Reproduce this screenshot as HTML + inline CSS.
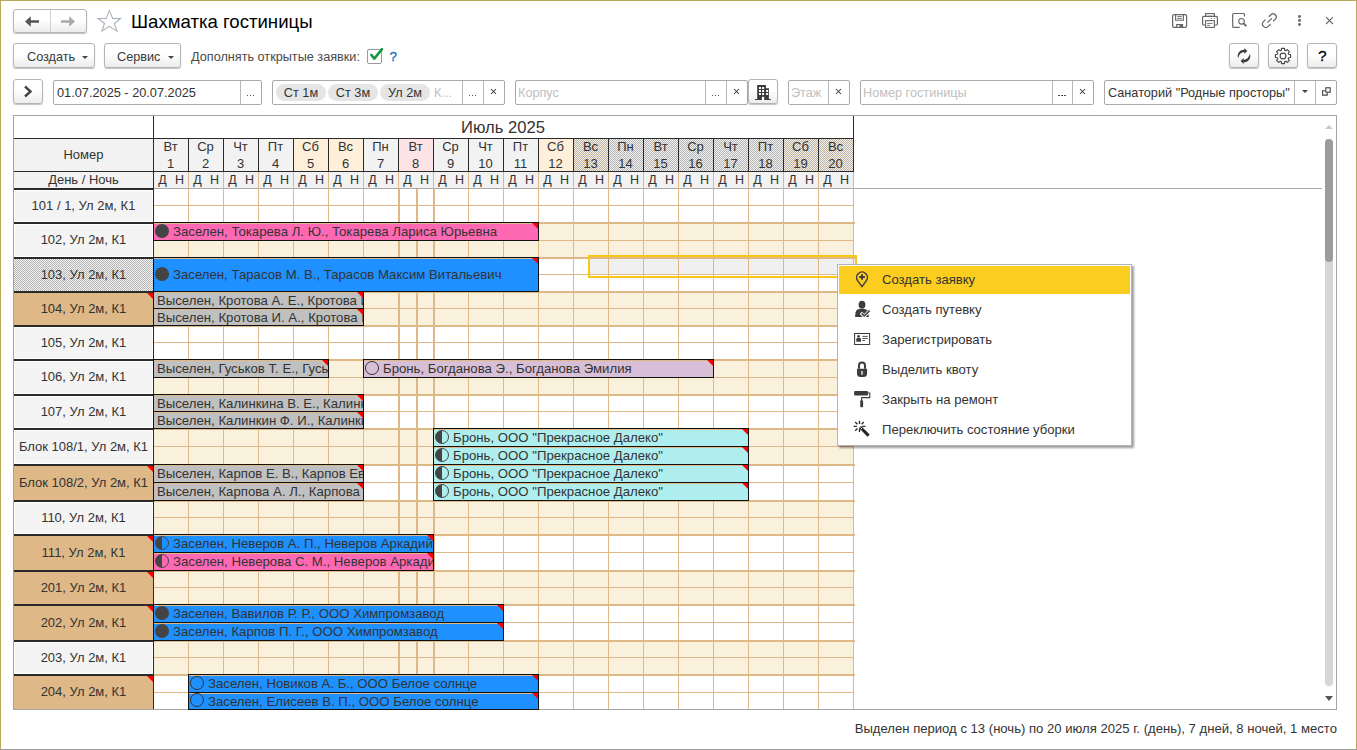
<!DOCTYPE html><html><head><meta charset="utf-8"><style>
html,body{margin:0;padding:0;}
body{width:1357px;height:750px;overflow:hidden;position:relative;background:#fff;font-family:"Liberation Sans", sans-serif;font-size:13px;color:#333;}
div{position:absolute;box-sizing:border-box;}
.t{white-space:nowrap;line-height:16px;}
.btn{border:1px solid #b4b4b4;border-radius:3px;background:linear-gradient(#fff 0%,#fff 45%,#ececec 100%);box-shadow:0 1px 1px rgba(0,0,0,.25);}
.fld{border:1px solid #a9a9a9;border-radius:2px;background:#fff;}
.chk{background:repeating-conic-gradient(#b4b4b4 0 25%, #f3f3f3 0 50%) 0 0/2px 2px;}
.chkw{background:repeating-conic-gradient(#b4b4b4 0 25%, #fdefd9 0 50%) 0 0/2px 2px;}

</style></head><body>
<div style="left:0px;top:0px;width:1357px;height:1px;background:#b9a95a"></div>
<div style="left:0px;top:0px;width:1px;height:750px;background:#b9a95a"></div>
<div style="left:1356px;top:0px;width:1px;height:750px;background:#b9a95a"></div>
<div style="left:0px;top:749px;width:1357px;height:1px;background:#9a9a9a"></div>
<div class="btn" style="left:13px;top:9px;width:74px;height:24px;"></div>
<div style="left:50px;top:10px;width:1px;height:22px;background:#d0d0d0"></div>
<svg style="position:absolute;left:0;top:0" width="90" height="40"><path d="M25 21.5 L30.8 16.2 L30.8 20.2 L39 20.2 L39 22.8 L30.8 22.8 L30.8 26.8 Z" fill="#555"/><path d="M75 21.5 L69.2 16.2 L69.2 20.2 L61 20.2 L61 22.8 L69.2 22.8 L69.2 26.8 Z" fill="#a9a9a9"/></svg>
<svg style="position:absolute;left:90px;top:0" width="40" height="40" viewBox="90 0 40 40"><path d="M109.4 10.6 L112.7 18.5 L120.6 18.5 L114.3 23.5 L116.9 31.1 L109.4 26.3 L101.9 31.1 L104.5 23.5 L98.2 18.5 L106.1 18.5 Z" fill="none" stroke="#a7b0b9" stroke-width="1.05" stroke-linejoin="miter"/></svg>
<div class="t" style="left:131px;top:12px;font-size:18.6px;color:#000;line-height:20px">Шахматка гостиницы</div>
<svg style="position:absolute;left:1150px;top:0" width="200" height="40" viewBox="1150 0 200 40">
<path d="M1174.2 14.6 H1185.2 Q1186.6 14.6 1186.6 16 V26 Q1186.6 27.4 1185.2 27.4 H1174 Q1172.6 27.4 1172.6 26 V16 Q1172.6 14.6 1174.2 14.6 Z" fill="none" stroke="#666" stroke-width="1.2"/>
<path d="M1175.6 14.6 V20.2 H1183.4 V14.6" fill="none" stroke="#666" stroke-width="1.1"/>
<path d="M1177.2 16.6 H1181.8 M1177.2 18.5 H1181.8" stroke="#666" stroke-width="0.9"/>
<path d="M1176.6 27.4 V24.6 H1182.6 V27.4" fill="none" stroke="#666" stroke-width="1.1"/>
<rect x="1179.6" y="24.6" width="3" height="2.8" fill="#666"/>
<rect x="1205.6" y="13.6" width="8.8" height="2.8" fill="none" stroke="#666" stroke-width="1.1"/>
<path d="M1205.4 25 H1203.6 Q1202.6 25 1202.6 24 V17.4 Q1202.6 16.4 1203.6 16.4 H1216.4 Q1217.4 16.4 1217.4 17.4 V24 Q1217.4 25 1216.4 25 H1214.6" fill="none" stroke="#666" stroke-width="1.2"/>
<rect x="1205.6" y="20.6" width="8.8" height="6.8" fill="#fff" stroke="#666" stroke-width="1.1"/>
<path d="M1207.2 23.4 H1212.6 M1207.2 25.4 H1209.8 M1211 18.5 H1212 M1214.2 18.5 H1215.2" stroke="#666" stroke-width="0.9"/>
<path d="M1239.7 27.4 H1233.6 Q1232.7 27.4 1232.7 26.5 V14.4 Q1232.7 13.5 1233.6 13.5 H1243.6 Q1244.5 13.5 1244.5 14.4 V16.6" fill="none" stroke="#666" stroke-width="1.2"/>
<circle cx="1241.5" cy="21.3" r="2.8" fill="none" stroke="#666" stroke-width="1.1"/>
<path d="M1243.6 23.4 L1246.3 26.1" stroke="#666" stroke-width="1.9"/>
<path d="M1268.8 16.8 L1270.9 14.7 A3 3 0 0 1 1275.3 19.1 L1273.2 21.2" fill="none" stroke="#666" stroke-width="1.25"/>
<path d="M1265.5 19.6 L1263.5 21.6 A3.2 3.2 0 0 0 1268.3 26.4 L1270.5 24.2" fill="none" stroke="#666" stroke-width="1.25"/>
<path d="M1267.4 22.7 L1271.8 18.3" stroke="#666" stroke-width="1.2"/>
<circle cx="1299.5" cy="16.45" r="1.45" fill="#666"/><circle cx="1299.5" cy="20.5" r="1.45" fill="#666"/><circle cx="1299.5" cy="24.55" r="1.45" fill="#666"/>
<path d="M1326.1 17.2 L1332.9 24 M1332.9 17.2 L1326.1 24" stroke="#666" stroke-width="1.1"/>
</svg>
<div class="btn" style="left:13px;top:43px;width:82px;height:25px;"></div>
<div class="t" style="left:27px;top:48.5px;font-size:12.7px;color:#3a3a3a">Создать</div>
<div style="left:82px;top:56px;width:0;height:0;border-left:3px solid transparent;border-right:3px solid transparent;border-top:3.2px solid #444"></div>
<div class="btn" style="left:104px;top:43px;width:77px;height:25px;"></div>
<div class="t" style="left:117px;top:48.5px;font-size:12.7px;color:#3a3a3a">Сервис</div>
<div style="left:168px;top:56px;width:0;height:0;border-left:3px solid transparent;border-right:3px solid transparent;border-top:3.2px solid #444"></div>
<div class="t" style="left:191px;top:48.5px;font-size:12.68px;color:#4a4a4a">Дополнять открытые заявки:</div>
<div style="left:367px;top:49px;width:15px;height:15px;border:1px solid #9a9a9a;border-radius:2px;background:#fff"></div>
<svg style="position:absolute;left:368px;top:47px" width="16" height="16" viewBox="0 0 16 16"><path d="M3.3 7.9 L6.3 11.6 L14 2.1" fill="none" stroke="#12993d" stroke-width="2.5" stroke-linecap="round" stroke-linejoin="round"/></svg>
<div class="t" style="left:389.5px;top:48.5px;font-size:13.4px;color:#1a72c4;-webkit-text-stroke:0.35px #1a72c4">?</div>
<div class="btn" style="left:1229px;top:43px;width:30px;height:25px;"></div>
<div class="btn" style="left:1268px;top:43px;width:30px;height:25px;"></div>
<div class="btn" style="left:1307px;top:43px;width:30px;height:25px;"></div>
<svg style="position:absolute;left:1220px;top:40px" width="80" height="30" viewBox="1220 40 80 30">
<path d="M1238.08 58.15 A6.3 6.3 0 0 1 1244.4 49.7 L1244.4 48 L1247.3 50.9 L1244.4 53.9 L1244.4 52.1 Q1239.6 52.3 1238.08 58.15 Z" fill="#3c3c3c"/><path d="M1249.92 53.85 A6.3 6.3 0 0 1 1243.6 62.3 L1243.6 64 L1240.7 61.1 L1243.6 58.1 L1243.6 59.9 Q1248.4 59.7 1249.92 53.85 Z" fill="#3c3c3c"/>
</svg>
<svg style="position:absolute;left:1260px;top:40px" width="40" height="30" viewBox="1260 40 40 30"><path d="M1280.74 50.55 L1281.28 50.36 L1281.53 48.44 L1284.47 48.44 L1284.72 50.36 L1285.26 50.55 L1285.77 50.79 L1287.31 49.62 L1289.38 51.69 L1288.21 53.23 L1288.45 53.74 L1288.64 54.28 L1290.56 54.53 L1290.56 57.47 L1288.64 57.72 L1288.45 58.26 L1288.21 58.77 L1289.38 60.31 L1287.31 62.38 L1285.77 61.21 L1285.26 61.45 L1284.72 61.64 L1284.47 63.56 L1281.53 63.56 L1281.28 61.64 L1280.74 61.45 L1280.23 61.21 L1278.69 62.38 L1276.62 60.31 L1277.79 58.77 L1277.55 58.26 L1277.36 57.72 L1275.44 57.47 L1275.44 54.53 L1277.36 54.28 L1277.55 53.74 L1277.79 53.23 L1276.62 51.69 L1278.69 49.62 L1280.23 50.79 Z" fill="none" stroke="#474747" stroke-width="1.15" stroke-linejoin="round"/><circle cx="1283" cy="56" r="2.9" fill="none" stroke="#474747" stroke-width="1.1"/></svg>
<div class="t" style="left:1318px;top:47px;font-size:15.5px;color:#000;font-weight:normal;line-height:18px;-webkit-text-stroke:0.3px #000">?</div>
<div class="btn" style="left:13px;top:79px;width:30px;height:25px;"></div>
<svg style="position:absolute;left:23px;top:85px" width="10" height="13" viewBox="0 0 10 13"><path d="M2 1.5 L7.5 6.5 L2 11.5" fill="none" stroke="#444" stroke-width="2.4"/></svg>
<div class="fld" style="left:53px;top:80px;width:209px;height:25px;"></div>
<div style="left:240px;top:81px;width:1px;height:23px;background:#b8b8b8"></div>
<div class="t" style="left:57px;top:85px;font-size:12.75px;color:#333">01.07.2025 - 20.07.2025</div>
<div style="left:246.85px;top:94.8px;width:1.4px;height:1.4px;background:#444;border-radius:0.3px"></div><div style="left:249.85px;top:94.8px;width:1.4px;height:1.4px;background:#444;border-radius:0.3px"></div><div style="left:252.85px;top:94.8px;width:1.4px;height:1.4px;background:#444;border-radius:0.3px"></div>
<div class="fld" style="left:272px;top:80px;width:233px;height:25px;"></div>
<div style="left:462px;top:81px;width:1px;height:23px;background:#b8b8b8"></div>
<div style="left:483px;top:81px;width:1px;height:23px;background:#b8b8b8"></div>
<div style="left:276px;top:84px;width:50px;height:17px;border-radius:9px;background:#e5e5e5"></div>
<div class="t" style="left:276px;top:84.5px;width:50px;text-align:center;font-size:12.7px;line-height:17px;color:#333">Ст 1м</div>
<div style="left:328px;top:84px;width:50px;height:17px;border-radius:9px;background:#e5e5e5"></div>
<div class="t" style="left:328px;top:84.5px;width:50px;text-align:center;font-size:12.7px;line-height:17px;color:#333">Ст 3м</div>
<div style="left:380px;top:84px;width:50px;height:17px;border-radius:9px;background:#e5e5e5"></div>
<div class="t" style="left:380px;top:84.5px;width:50px;text-align:center;font-size:12.7px;line-height:17px;color:#333">Ул 2м</div>
<div class="t" style="left:434px;top:85px;font-size:12.7px;color:#c0c0c0">К...</div>
<div style="left:468.85px;top:94.8px;width:1.4px;height:1.4px;background:#444;border-radius:0.3px"></div><div style="left:471.85px;top:94.8px;width:1.4px;height:1.4px;background:#444;border-radius:0.3px"></div><div style="left:474.85px;top:94.8px;width:1.4px;height:1.4px;background:#444;border-radius:0.3px"></div>
<svg style="position:absolute;left:489px;top:87px" width="9" height="9" viewBox="0 0 9 9"><path d="M2 2 L7 7 M7 2 L2 7" stroke="#3a3a3a" stroke-width="1.05"/></svg>
<div class="fld" style="left:515px;top:80px;width:233px;height:25px;"></div>
<div style="left:705px;top:81px;width:1px;height:23px;background:#b8b8b8"></div>
<div style="left:726px;top:81px;width:1px;height:23px;background:#b8b8b8"></div>
<div class="t" style="left:518px;top:85px;font-size:12.7px;color:#c0c0c0">Корпус</div>
<div style="left:711.85px;top:94.8px;width:1.4px;height:1.4px;background:#444;border-radius:0.3px"></div><div style="left:714.85px;top:94.8px;width:1.4px;height:1.4px;background:#444;border-radius:0.3px"></div><div style="left:717.85px;top:94.8px;width:1.4px;height:1.4px;background:#444;border-radius:0.3px"></div>
<svg style="position:absolute;left:732px;top:87px" width="9" height="9" viewBox="0 0 9 9"><path d="M2 2 L7 7 M7 2 L2 7" stroke="#3a3a3a" stroke-width="1.05"/></svg>
<div class="btn" style="left:748px;top:79px;width:30px;height:25px;"></div>
<svg style="position:absolute;left:740px;top:76px" width="40" height="30" viewBox="740 76 40 30"><path d="M757.2 85 H765.9 V88.2 H768.9 V99 H770.8 V100 H755 V99 H757.2 Z" fill="#3a3a3a"/><g fill="#fff"><rect x="759" y="87" width="2" height="2"/><rect x="762.1" y="87" width="2" height="2"/><rect x="759" y="90" width="2" height="2"/><rect x="762.1" y="90" width="2" height="2"/><rect x="759" y="93" width="2" height="2"/><rect x="762.1" y="93" width="2" height="2"/><rect x="766.1" y="90" width="2" height="2"/><rect x="766.1" y="93" width="2" height="2"/><rect x="761.9" y="96.8" width="2.3" height="3.4"/></g></svg>
<div class="fld" style="left:788px;top:80px;width:62px;height:25px;"></div>
<div style="left:828px;top:81px;width:1px;height:23px;background:#b8b8b8"></div>
<div class="t" style="left:791px;top:85px;font-size:12.7px;color:#c0c0c0">Этаж</div>
<svg style="position:absolute;left:834px;top:87px" width="9" height="9" viewBox="0 0 9 9"><path d="M2 2 L7 7 M7 2 L2 7" stroke="#3a3a3a" stroke-width="1.05"/></svg>
<div class="fld" style="left:860px;top:80px;width:234px;height:25px;"></div>
<div style="left:1052px;top:81px;width:1px;height:23px;background:#b8b8b8"></div>
<div style="left:1072px;top:81px;width:1px;height:23px;background:#b8b8b8"></div>
<div class="t" style="left:863px;top:85px;font-size:12.7px;color:#c0c0c0">Номер гостиницы</div>
<div style="left:1058.35px;top:94.8px;width:1.4px;height:1.4px;background:#444;border-radius:0.3px"></div><div style="left:1061.35px;top:94.8px;width:1.4px;height:1.4px;background:#444;border-radius:0.3px"></div><div style="left:1064.35px;top:94.8px;width:1.4px;height:1.4px;background:#444;border-radius:0.3px"></div>
<svg style="position:absolute;left:1078px;top:87px" width="9" height="9" viewBox="0 0 9 9"><path d="M2 2 L7 7 M7 2 L2 7" stroke="#3a3a3a" stroke-width="1.05"/></svg>
<div class="fld" style="left:1104px;top:80px;width:233px;height:25px;"></div>
<div style="left:1294px;top:81px;width:1px;height:23px;background:#b8b8b8"></div>
<div style="left:1315px;top:81px;width:1px;height:23px;background:#b8b8b8"></div>
<div class="t" style="left:1108px;top:85px;font-size:12.7px;color:#333">Санаторий "Родные просторы"</div>
<div style="left:1302px;top:90px;width:0;height:0;border-left:3px solid transparent;border-right:3px solid transparent;border-top:3.2px solid #444"></div>
<svg style="position:absolute;left:1320px;top:86px" width="12" height="12" viewBox="0 0 12 12"><rect x="5.8" y="1.8" width="4.4" height="4.4" fill="none" stroke="#444" stroke-width="1.1"/><path d="M5 4.8 H2.6 V9.1 H7.2 V6.8" fill="none" stroke="#444" stroke-width="1.1"/></svg>
<div style="left:13px;top:115px;width:1324px;height:595px;border:1px solid #a4a4a4"></div>
<div style="left:14px;top:139px;width:139px;height:49px;background:#f2f2f2"></div>
<div style="left:153px;top:139px;width:35px;height:32px;background:#f2f2f2"></div>
<div style="left:153px;top:172px;width:35px;height:16px;background:#f2f2f2"></div>
<div class="t" style="left:153px;top:139px;width:35px;text-align:center;font-size:13px;line-height:16.6px">Вт<br>1</div>
<div class="t" style="left:154px;top:172px;width:17px;text-align:center;font-size:12.5px;line-height:16px">Д</div>
<div class="t" style="left:171px;top:172px;width:17px;text-align:center;font-size:12.5px;line-height:16px">Н</div>
<div style="left:188px;top:139px;width:35px;height:32px;background:#f2f2f2"></div>
<div style="left:188px;top:172px;width:35px;height:16px;background:#f2f2f2"></div>
<div class="t" style="left:188px;top:139px;width:35px;text-align:center;font-size:13px;line-height:16.6px">Ср<br>2</div>
<div class="t" style="left:189px;top:172px;width:17px;text-align:center;font-size:12.5px;line-height:16px">Д</div>
<div class="t" style="left:206px;top:172px;width:17px;text-align:center;font-size:12.5px;line-height:16px">Н</div>
<div style="left:223px;top:139px;width:35px;height:32px;background:#f2f2f2"></div>
<div style="left:223px;top:172px;width:35px;height:16px;background:#f2f2f2"></div>
<div class="t" style="left:223px;top:139px;width:35px;text-align:center;font-size:13px;line-height:16.6px">Чт<br>3</div>
<div class="t" style="left:224px;top:172px;width:17px;text-align:center;font-size:12.5px;line-height:16px">Д</div>
<div class="t" style="left:241px;top:172px;width:17px;text-align:center;font-size:12.5px;line-height:16px">Н</div>
<div style="left:258px;top:139px;width:35px;height:32px;background:#f2f2f2"></div>
<div style="left:258px;top:172px;width:35px;height:16px;background:#f2f2f2"></div>
<div class="t" style="left:258px;top:139px;width:35px;text-align:center;font-size:13px;line-height:16.6px">Пт<br>4</div>
<div class="t" style="left:259px;top:172px;width:17px;text-align:center;font-size:12.5px;line-height:16px">Д</div>
<div class="t" style="left:276px;top:172px;width:17px;text-align:center;font-size:12.5px;line-height:16px">Н</div>
<div style="left:293px;top:139px;width:35px;height:32px;background:#fdefd9"></div>
<div style="left:293px;top:172px;width:35px;height:16px;background:#f2f2f2"></div>
<div class="t" style="left:293px;top:139px;width:35px;text-align:center;font-size:13px;line-height:16.6px">Сб<br>5</div>
<div class="t" style="left:294px;top:172px;width:17px;text-align:center;font-size:12.5px;line-height:16px">Д</div>
<div class="t" style="left:311px;top:172px;width:17px;text-align:center;font-size:12.5px;line-height:16px">Н</div>
<div style="left:328px;top:139px;width:35px;height:32px;background:#fdefd9"></div>
<div style="left:328px;top:172px;width:35px;height:16px;background:#f2f2f2"></div>
<div class="t" style="left:328px;top:139px;width:35px;text-align:center;font-size:13px;line-height:16.6px">Вс<br>6</div>
<div class="t" style="left:329px;top:172px;width:17px;text-align:center;font-size:12.5px;line-height:16px">Д</div>
<div class="t" style="left:346px;top:172px;width:17px;text-align:center;font-size:12.5px;line-height:16px">Н</div>
<div style="left:363px;top:139px;width:35px;height:32px;background:#f2f2f2"></div>
<div style="left:363px;top:172px;width:35px;height:16px;background:#f2f2f2"></div>
<div class="t" style="left:363px;top:139px;width:35px;text-align:center;font-size:13px;line-height:16.6px">Пн<br>7</div>
<div class="t" style="left:364px;top:172px;width:17px;text-align:center;font-size:12.5px;line-height:16px">Д</div>
<div class="t" style="left:381px;top:172px;width:17px;text-align:center;font-size:12.5px;line-height:16px">Н</div>
<div style="left:398px;top:139px;width:35px;height:32px;background:#fde3e3"></div>
<div style="left:398px;top:172px;width:35px;height:16px;background:#f2f2f2"></div>
<div class="t" style="left:398px;top:139px;width:35px;text-align:center;font-size:13px;line-height:16.6px">Вт<br>8</div>
<div class="t" style="left:399px;top:172px;width:17px;text-align:center;font-size:12.5px;line-height:16px">Д</div>
<div class="t" style="left:416px;top:172px;width:17px;text-align:center;font-size:12.5px;line-height:16px">Н</div>
<div style="left:433px;top:139px;width:35px;height:32px;background:#f2f2f2"></div>
<div style="left:433px;top:172px;width:35px;height:16px;background:#f2f2f2"></div>
<div class="t" style="left:433px;top:139px;width:35px;text-align:center;font-size:13px;line-height:16.6px">Ср<br>9</div>
<div class="t" style="left:434px;top:172px;width:17px;text-align:center;font-size:12.5px;line-height:16px">Д</div>
<div class="t" style="left:451px;top:172px;width:17px;text-align:center;font-size:12.5px;line-height:16px">Н</div>
<div style="left:468px;top:139px;width:35px;height:32px;background:#f2f2f2"></div>
<div style="left:468px;top:172px;width:35px;height:16px;background:#f2f2f2"></div>
<div class="t" style="left:468px;top:139px;width:35px;text-align:center;font-size:13px;line-height:16.6px">Чт<br>10</div>
<div class="t" style="left:469px;top:172px;width:17px;text-align:center;font-size:12.5px;line-height:16px">Д</div>
<div class="t" style="left:486px;top:172px;width:17px;text-align:center;font-size:12.5px;line-height:16px">Н</div>
<div style="left:503px;top:139px;width:35px;height:32px;background:#f2f2f2"></div>
<div style="left:503px;top:172px;width:35px;height:16px;background:#f2f2f2"></div>
<div class="t" style="left:503px;top:139px;width:35px;text-align:center;font-size:13px;line-height:16.6px">Пт<br>11</div>
<div class="t" style="left:504px;top:172px;width:17px;text-align:center;font-size:12.5px;line-height:16px">Д</div>
<div class="t" style="left:521px;top:172px;width:17px;text-align:center;font-size:12.5px;line-height:16px">Н</div>
<div style="left:538px;top:139px;width:35px;height:32px;background:#fdefd9"></div>
<div style="left:538px;top:172px;width:35px;height:16px;background:#f2f2f2"></div>
<div class="t" style="left:538px;top:139px;width:35px;text-align:center;font-size:13px;line-height:16.6px">Сб<br>12</div>
<div class="t" style="left:539px;top:172px;width:17px;text-align:center;font-size:12.5px;line-height:16px">Д</div>
<div class="t" style="left:556px;top:172px;width:17px;text-align:center;font-size:12.5px;line-height:16px">Н</div>
<div class="chkw" style="left:573px;top:139px;width:35px;height:32px"></div>
<div style="left:573px;top:172px;width:35px;height:16px;background:#f2f2f2"></div>
<div class="t" style="left:573px;top:139px;width:35px;text-align:center;font-size:13px;line-height:16.6px">Вс<br>13</div>
<div class="t" style="left:574px;top:172px;width:17px;text-align:center;font-size:12.5px;line-height:16px">Д</div>
<div class="t" style="left:591px;top:172px;width:17px;text-align:center;font-size:12.5px;line-height:16px">Н</div>
<div class="chk" style="left:608px;top:139px;width:35px;height:32px"></div>
<div style="left:608px;top:172px;width:35px;height:16px;background:#f2f2f2"></div>
<div class="t" style="left:608px;top:139px;width:35px;text-align:center;font-size:13px;line-height:16.6px">Пн<br>14</div>
<div class="t" style="left:609px;top:172px;width:17px;text-align:center;font-size:12.5px;line-height:16px">Д</div>
<div class="t" style="left:626px;top:172px;width:17px;text-align:center;font-size:12.5px;line-height:16px">Н</div>
<div class="chk" style="left:643px;top:139px;width:35px;height:32px"></div>
<div style="left:643px;top:172px;width:35px;height:16px;background:#f2f2f2"></div>
<div class="t" style="left:643px;top:139px;width:35px;text-align:center;font-size:13px;line-height:16.6px">Вт<br>15</div>
<div class="t" style="left:644px;top:172px;width:17px;text-align:center;font-size:12.5px;line-height:16px">Д</div>
<div class="t" style="left:661px;top:172px;width:17px;text-align:center;font-size:12.5px;line-height:16px">Н</div>
<div class="chk" style="left:678px;top:139px;width:35px;height:32px"></div>
<div style="left:678px;top:172px;width:35px;height:16px;background:#f2f2f2"></div>
<div class="t" style="left:678px;top:139px;width:35px;text-align:center;font-size:13px;line-height:16.6px">Ср<br>16</div>
<div class="t" style="left:679px;top:172px;width:17px;text-align:center;font-size:12.5px;line-height:16px">Д</div>
<div class="t" style="left:696px;top:172px;width:17px;text-align:center;font-size:12.5px;line-height:16px">Н</div>
<div class="chk" style="left:713px;top:139px;width:35px;height:32px"></div>
<div style="left:713px;top:172px;width:35px;height:16px;background:#f2f2f2"></div>
<div class="t" style="left:713px;top:139px;width:35px;text-align:center;font-size:13px;line-height:16.6px">Чт<br>17</div>
<div class="t" style="left:714px;top:172px;width:17px;text-align:center;font-size:12.5px;line-height:16px">Д</div>
<div class="t" style="left:731px;top:172px;width:17px;text-align:center;font-size:12.5px;line-height:16px">Н</div>
<div class="chk" style="left:748px;top:139px;width:35px;height:32px"></div>
<div style="left:748px;top:172px;width:35px;height:16px;background:#f2f2f2"></div>
<div class="t" style="left:748px;top:139px;width:35px;text-align:center;font-size:13px;line-height:16.6px">Пт<br>18</div>
<div class="t" style="left:749px;top:172px;width:17px;text-align:center;font-size:12.5px;line-height:16px">Д</div>
<div class="t" style="left:766px;top:172px;width:17px;text-align:center;font-size:12.5px;line-height:16px">Н</div>
<div class="chkw" style="left:783px;top:139px;width:35px;height:32px"></div>
<div style="left:783px;top:172px;width:35px;height:16px;background:#f2f2f2"></div>
<div class="t" style="left:783px;top:139px;width:35px;text-align:center;font-size:13px;line-height:16.6px">Сб<br>19</div>
<div class="t" style="left:784px;top:172px;width:17px;text-align:center;font-size:12.5px;line-height:16px">Д</div>
<div class="t" style="left:801px;top:172px;width:17px;text-align:center;font-size:12.5px;line-height:16px">Н</div>
<div class="chkw" style="left:818px;top:139px;width:35px;height:32px"></div>
<div style="left:818px;top:172px;width:35px;height:16px;background:#f2f2f2"></div>
<div class="t" style="left:818px;top:139px;width:35px;text-align:center;font-size:13px;line-height:16.6px">Вс<br>20</div>
<div class="t" style="left:819px;top:172px;width:17px;text-align:center;font-size:12.5px;line-height:16px">Д</div>
<div class="t" style="left:836px;top:172px;width:17px;text-align:center;font-size:12.5px;line-height:16px">Н</div>
<div class="t" style="left:153px;top:119px;width:700px;text-align:center;font-size:16.6px;line-height:18px">Июль 2025</div>
<div class="t" style="left:14px;top:147px;width:139px;text-align:center;font-size:13px">Номер</div>
<div class="t" style="left:14px;top:172px;width:139px;text-align:center;font-size:13px">День / Ночь</div>
<div style="left:14px;top:190px;width:139px;height:32px;background:#f4f4f4;border:1px solid #fff"></div>
<div class="t" style="left:14px;top:198px;width:139px;text-align:center;font-size:13px;color:#333">101 / 1, Ул 2м, К1</div>
<div style="left:14px;top:224px;width:139px;height:33px;background:#f4f4f4;border:1px solid #fff"></div>
<div class="t" style="left:14px;top:232px;width:139px;text-align:center;font-size:13px;color:#333">102, Ул 2м, К1</div>
<div style="left:154px;top:224px;width:699px;height:33px;background:#f9f1dc"></div>
<div class="chk" style="left:14px;top:259px;width:139px;height:32px"></div>
<div class="t" style="left:14px;top:267px;width:139px;text-align:center;font-size:13px;color:#333">103, Ул 2м, К1</div>
<div style="left:14px;top:293px;width:139px;height:32px;background:#deb887;border:1px solid #deb887"></div>
<div style="left:147px;top:293px;width:0;height:0;border-top:6px solid #f00;border-left:6px solid transparent"></div>
<div class="t" style="left:14px;top:301px;width:139px;text-align:center;font-size:13px;color:#333">104, Ул 2м, К1</div>
<div style="left:154px;top:293px;width:699px;height:32px;background:#f9f1dc"></div>
<div style="left:14px;top:327px;width:139px;height:32px;background:#f4f4f4;border:1px solid #fff"></div>
<div class="t" style="left:14px;top:335px;width:139px;text-align:center;font-size:13px;color:#333">105, Ул 2м, К1</div>
<div style="left:14px;top:361px;width:139px;height:33px;background:#f4f4f4;border:1px solid #fff"></div>
<div class="t" style="left:14px;top:369px;width:139px;text-align:center;font-size:13px;color:#333">106, Ул 2м, К1</div>
<div style="left:154px;top:361px;width:699px;height:33px;background:#f9f1dc"></div>
<div style="left:14px;top:396px;width:139px;height:32px;background:#f4f4f4;border:1px solid #fff"></div>
<div class="t" style="left:14px;top:404px;width:139px;text-align:center;font-size:13px;color:#333">107, Ул 2м, К1</div>
<div style="left:14px;top:430px;width:139px;height:34px;background:#f4f4f4;border:1px solid #fff"></div>
<div class="t" style="left:14px;top:439px;width:139px;text-align:center;font-size:13px;color:#333">Блок 108/1, Ул 2м, К1</div>
<div style="left:154px;top:430px;width:699px;height:34px;background:#f9f1dc"></div>
<div style="left:14px;top:466px;width:139px;height:34px;background:#deb887;border:1px solid #deb887"></div>
<div style="left:147px;top:466px;width:0;height:0;border-top:6px solid #f00;border-left:6px solid transparent"></div>
<div class="t" style="left:14px;top:475px;width:139px;text-align:center;font-size:13px;color:#333">Блок 108/2, Ул 2м, К1</div>
<div style="left:14px;top:502px;width:139px;height:32px;background:#f4f4f4;border:1px solid #fff"></div>
<div class="t" style="left:14px;top:510px;width:139px;text-align:center;font-size:13px;color:#333">110, Ул 2м, К1</div>
<div style="left:154px;top:502px;width:699px;height:32px;background:#f9f1dc"></div>
<div style="left:14px;top:536px;width:139px;height:34px;background:#deb887;border:1px solid #deb887"></div>
<div style="left:147px;top:536px;width:0;height:0;border-top:6px solid #f00;border-left:6px solid transparent"></div>
<div class="t" style="left:14px;top:545px;width:139px;text-align:center;font-size:13px;color:#333">111, Ул 2м, К1</div>
<div style="left:14px;top:572px;width:139px;height:32px;background:#deb887;border:1px solid #deb887"></div>
<div style="left:147px;top:572px;width:0;height:0;border-top:6px solid #f00;border-left:6px solid transparent"></div>
<div class="t" style="left:14px;top:580px;width:139px;text-align:center;font-size:13px;color:#333">201, Ул 2м, К1</div>
<div style="left:154px;top:572px;width:699px;height:32px;background:#f9f1dc"></div>
<div style="left:14px;top:606px;width:139px;height:34px;background:#deb887;border:1px solid #deb887"></div>
<div style="left:147px;top:606px;width:0;height:0;border-top:6px solid #f00;border-left:6px solid transparent"></div>
<div class="t" style="left:14px;top:615px;width:139px;text-align:center;font-size:13px;color:#333">202, Ул 2м, К1</div>
<div style="left:14px;top:642px;width:139px;height:32px;background:#f4f4f4;border:1px solid #fff"></div>
<div class="t" style="left:14px;top:650px;width:139px;text-align:center;font-size:13px;color:#333">203, Ул 2м, К1</div>
<div style="left:154px;top:642px;width:699px;height:32px;background:#f9f1dc"></div>
<div style="left:14px;top:676px;width:139px;height:33px;background:#deb887;border:1px solid #deb887"></div>
<div style="left:147px;top:676px;width:0;height:0;border-top:6px solid #f00;border-left:6px solid transparent"></div>
<div class="t" style="left:14px;top:684px;width:139px;text-align:center;font-size:13px;color:#333">204, Ул 2м, К1</div>
<div style="left:590px;top:259px;width:265px;height:16px;background:#f0f0f0"></div>
<div style="left:14px;top:222px;width:139px;height:2px;background:#2a2a2a"></div>
<div style="left:154px;top:222px;width:701px;height:2px;background:#deb887"></div>
<div style="left:14px;top:257px;width:139px;height:2px;background:#2a2a2a"></div>
<div style="left:154px;top:257px;width:701px;height:2px;background:#deb887"></div>
<div style="left:14px;top:291px;width:139px;height:2px;background:#2a2a2a"></div>
<div style="left:154px;top:291px;width:701px;height:2px;background:#deb887"></div>
<div style="left:14px;top:325px;width:139px;height:2px;background:#2a2a2a"></div>
<div style="left:154px;top:325px;width:701px;height:2px;background:#deb887"></div>
<div style="left:14px;top:359px;width:139px;height:2px;background:#2a2a2a"></div>
<div style="left:154px;top:359px;width:701px;height:2px;background:#deb887"></div>
<div style="left:14px;top:394px;width:139px;height:2px;background:#2a2a2a"></div>
<div style="left:154px;top:394px;width:701px;height:2px;background:#deb887"></div>
<div style="left:14px;top:428px;width:139px;height:2px;background:#2a2a2a"></div>
<div style="left:154px;top:428px;width:701px;height:2px;background:#deb887"></div>
<div style="left:14px;top:464px;width:139px;height:2px;background:#2a2a2a"></div>
<div style="left:154px;top:464px;width:701px;height:2px;background:#deb887"></div>
<div style="left:14px;top:500px;width:139px;height:2px;background:#2a2a2a"></div>
<div style="left:154px;top:500px;width:701px;height:2px;background:#deb887"></div>
<div style="left:14px;top:534px;width:139px;height:2px;background:#2a2a2a"></div>
<div style="left:154px;top:534px;width:701px;height:2px;background:#deb887"></div>
<div style="left:14px;top:570px;width:139px;height:2px;background:#2a2a2a"></div>
<div style="left:154px;top:570px;width:701px;height:2px;background:#deb887"></div>
<div style="left:14px;top:604px;width:139px;height:2px;background:#2a2a2a"></div>
<div style="left:154px;top:604px;width:701px;height:2px;background:#deb887"></div>
<div style="left:14px;top:640px;width:139px;height:2px;background:#2a2a2a"></div>
<div style="left:154px;top:640px;width:701px;height:2px;background:#deb887"></div>
<div style="left:14px;top:674px;width:139px;height:2px;background:#2a2a2a"></div>
<div style="left:154px;top:674px;width:701px;height:2px;background:#deb887"></div>
<div style="left:14px;top:188px;width:139px;height:2px;background:#2a2a2a"></div>
<div style="left:154px;top:188px;width:1168px;height:1px;background:#a8a8a8"></div>
<div style="left:154px;top:205px;width:699px;height:1px;background:#deb887"></div>
<div style="left:154px;top:240px;width:699px;height:1px;background:#deb887"></div>
<div style="left:154px;top:274px;width:699px;height:1px;background:#deb887"></div>
<div style="left:154px;top:308px;width:699px;height:1px;background:#deb887"></div>
<div style="left:154px;top:342px;width:699px;height:1px;background:#deb887"></div>
<div style="left:154px;top:377px;width:699px;height:1px;background:#deb887"></div>
<div style="left:154px;top:411px;width:699px;height:1px;background:#deb887"></div>
<div style="left:154px;top:446px;width:699px;height:1px;background:#deb887"></div>
<div style="left:154px;top:482px;width:699px;height:1px;background:#deb887"></div>
<div style="left:154px;top:517px;width:699px;height:1px;background:#deb887"></div>
<div style="left:154px;top:552px;width:699px;height:1px;background:#deb887"></div>
<div style="left:154px;top:587px;width:699px;height:1px;background:#deb887"></div>
<div style="left:154px;top:622px;width:699px;height:1px;background:#deb887"></div>
<div style="left:154px;top:657px;width:699px;height:1px;background:#deb887"></div>
<div style="left:154px;top:692px;width:699px;height:1px;background:#deb887"></div>
<div style="left:153px;top:116px;width:1px;height:593px;background:#2a2a2a"></div>
<div style="left:14px;top:138px;width:839px;height:1px;background:#2a2a2a"></div>
<div style="left:14px;top:171px;width:839px;height:1px;background:#2a2a2a"></div>
<div style="left:853px;top:116px;width:1px;height:56px;background:#2a2a2a"></div>
<div style="left:853px;top:172px;width:1px;height:537px;background:#deb887"></div>
<div style="left:188px;top:139px;width:1px;height:33px;background:#2a2a2a"></div>
<div style="left:188px;top:172px;width:1px;height:537px;background:#deb887"></div>
<div style="left:223px;top:139px;width:1px;height:33px;background:#2a2a2a"></div>
<div style="left:223px;top:172px;width:1px;height:537px;background:#deb887"></div>
<div style="left:258px;top:139px;width:1px;height:33px;background:#2a2a2a"></div>
<div style="left:258px;top:172px;width:1px;height:537px;background:#deb887"></div>
<div style="left:293px;top:139px;width:1px;height:33px;background:#2a2a2a"></div>
<div style="left:293px;top:172px;width:1px;height:537px;background:#deb887"></div>
<div style="left:328px;top:139px;width:1px;height:33px;background:#2a2a2a"></div>
<div style="left:328px;top:172px;width:1px;height:537px;background:#deb887"></div>
<div style="left:363px;top:139px;width:1px;height:33px;background:#2a2a2a"></div>
<div style="left:363px;top:172px;width:1px;height:537px;background:#deb887"></div>
<div style="left:398px;top:139px;width:1px;height:33px;background:#2a2a2a"></div>
<div style="left:398px;top:172px;width:1px;height:537px;background:#deb887"></div>
<div style="left:433px;top:139px;width:1px;height:33px;background:#2a2a2a"></div>
<div style="left:433px;top:172px;width:1px;height:537px;background:#deb887"></div>
<div style="left:468px;top:139px;width:1px;height:33px;background:#2a2a2a"></div>
<div style="left:468px;top:172px;width:1px;height:537px;background:#deb887"></div>
<div style="left:503px;top:139px;width:1px;height:33px;background:#2a2a2a"></div>
<div style="left:503px;top:172px;width:1px;height:537px;background:#deb887"></div>
<div style="left:538px;top:139px;width:1px;height:33px;background:#2a2a2a"></div>
<div style="left:538px;top:172px;width:1px;height:537px;background:#deb887"></div>
<div style="left:573px;top:139px;width:1px;height:33px;background:#2a2a2a"></div>
<div style="left:573px;top:172px;width:1px;height:537px;background:#deb887"></div>
<div style="left:608px;top:139px;width:1px;height:33px;background:#2a2a2a"></div>
<div style="left:608px;top:172px;width:1px;height:537px;background:#deb887"></div>
<div style="left:643px;top:139px;width:1px;height:33px;background:#2a2a2a"></div>
<div style="left:643px;top:172px;width:1px;height:537px;background:#deb887"></div>
<div style="left:678px;top:139px;width:1px;height:33px;background:#2a2a2a"></div>
<div style="left:678px;top:172px;width:1px;height:537px;background:#deb887"></div>
<div style="left:713px;top:139px;width:1px;height:33px;background:#2a2a2a"></div>
<div style="left:713px;top:172px;width:1px;height:537px;background:#deb887"></div>
<div style="left:748px;top:139px;width:1px;height:33px;background:#2a2a2a"></div>
<div style="left:748px;top:172px;width:1px;height:537px;background:#deb887"></div>
<div style="left:783px;top:139px;width:1px;height:33px;background:#2a2a2a"></div>
<div style="left:783px;top:172px;width:1px;height:537px;background:#deb887"></div>
<div style="left:818px;top:139px;width:1px;height:33px;background:#2a2a2a"></div>
<div style="left:818px;top:172px;width:1px;height:537px;background:#deb887"></div>
<div style="left:398px;top:189px;width:2px;height:520px;background:#deb887"></div>
<div style="left:416px;top:189px;width:2px;height:520px;background:#deb887"></div>
<div style="left:433px;top:189px;width:2px;height:520px;background:#deb887"></div>
<div style="left:153px;top:222px;width:386px;height:19px;background:#ff69b4;border:1px solid #111;overflow:hidden"><div style="left:0;top:0;width:100%;height:1px;background:#deb887"></div><div class="t" style="left:19px;top:1px;font-size:13.2px;color:#333">Заселен, Токарева Л. Ю., Токарева Лариса Юрьевна</div><div style="right:0;top:0;width:0;height:0;border-top:6px solid #f00;border-left:6px solid transparent"></div></div>
<div style="left:155px;top:223.7px;width:14px;height:14px;border-radius:7px;background:#444"></div>
<div style="left:153px;top:257px;width:386px;height:35px;background:#1e90ff;border:1px solid #111;overflow:hidden"><div style="left:0;top:0;width:100%;height:1px;background:#deb887"></div><div class="t" style="left:19px;top:9px;font-size:13.2px;color:#333">Заселен, Тарасов М. В., Тарасов Максим Витальевич</div><div style="right:0;top:0;width:0;height:0;border-top:6px solid #f00;border-left:6px solid transparent"></div></div>
<div style="left:155px;top:266.7px;width:14px;height:14px;border-radius:7px;background:#444"></div>
<div style="left:153px;top:291px;width:211px;height:18px;background:#c0c0c0;border:1px solid #111;overflow:hidden"><div style="left:0;top:0;width:100%;height:1px;background:#deb887"></div><div class="t" style="left:3px;top:1px;font-size:13.2px;color:#333">Выселен, Кротова А. Е., Кротова Ирина Алексеевна</div><div style="right:0;top:0;width:0;height:0;border-top:6px solid #f00;border-left:6px solid transparent"></div></div>
<div style="left:153px;top:308px;width:211px;height:18px;background:#c0c0c0;border:1px solid #111;overflow:hidden"><div style="left:0;top:0;width:100%;height:1px;background:#deb887"></div><div class="t" style="left:3px;top:1px;font-size:13.2px;color:#333">Выселен, Кротова И. А., Кротова Ирина Алексеевна</div><div style="right:0;top:0;width:0;height:0;border-top:6px solid #f00;border-left:6px solid transparent"></div></div>
<div style="left:153px;top:359px;width:176px;height:19px;background:#c0c0c0;border:1px solid #111;overflow:hidden"><div style="left:0;top:0;width:100%;height:1px;background:#deb887"></div><div class="t" style="left:3px;top:1px;font-size:13.2px;color:#333">Выселен, Гуськов Т. Е., Гуськов Тимофей</div><div style="right:0;top:0;width:0;height:0;border-top:6px solid #f00;border-left:6px solid transparent"></div></div>
<div style="left:363px;top:359px;width:351px;height:19px;background:#d8bfd8;border:1px solid #111;overflow:hidden"><div style="left:0;top:0;width:100%;height:1px;background:#deb887"></div><div class="t" style="left:19px;top:1px;font-size:13.2px;color:#333">Бронь, Богданова Э., Богданова Эмилия</div><div style="right:0;top:0;width:0;height:0;border-top:6px solid #f00;border-left:6px solid transparent"></div></div>
<div style="left:365px;top:360.7px;width:14px;height:14px;border-radius:7px;border:1.3px solid #333"></div>
<div style="left:153px;top:394px;width:211px;height:18px;background:#c0c0c0;border:1px solid #111;overflow:hidden"><div style="left:0;top:0;width:100%;height:1px;background:#deb887"></div><div class="t" style="left:3px;top:1px;font-size:13.2px;color:#333">Выселен, Калинкина В. Е., Калинкина Валентина</div><div style="right:0;top:0;width:0;height:0;border-top:6px solid #f00;border-left:6px solid transparent"></div></div>
<div style="left:153px;top:411px;width:211px;height:18px;background:#c0c0c0;border:1px solid #111;overflow:hidden"><div style="left:0;top:0;width:100%;height:1px;background:#deb887"></div><div class="t" style="left:3px;top:1px;font-size:13.2px;color:#333">Выселен, Калинкин Ф. И., Калинкина Валентина</div><div style="right:0;top:0;width:0;height:0;border-top:6px solid #f00;border-left:6px solid transparent"></div></div>
<div style="left:433px;top:428px;width:316px;height:19px;background:#afeeee;border:1px solid #111;overflow:hidden"><div style="left:0;top:0;width:100%;height:1px;background:#deb887"></div><div class="t" style="left:19px;top:1px;font-size:13.2px;color:#333">Бронь, ООО "Прекрасное Далеко"</div><div style="right:0;top:0;width:0;height:0;border-top:6px solid #f00;border-left:6px solid transparent"></div></div>
<div style="left:435px;top:429.7px;width:14px;height:14px;border-radius:7px;border:1.3px solid #444;background:linear-gradient(90deg,#444 50%,transparent 50%)"></div>
<div style="left:433px;top:446px;width:316px;height:19px;background:#afeeee;border:1px solid #111;overflow:hidden"><div style="left:0;top:0;width:100%;height:1px;background:#deb887"></div><div class="t" style="left:19px;top:1px;font-size:13.2px;color:#333">Бронь, ООО "Прекрасное Далеко"</div><div style="right:0;top:0;width:0;height:0;border-top:6px solid #f00;border-left:6px solid transparent"></div></div>
<div style="left:435px;top:447.7px;width:14px;height:14px;border-radius:7px;border:1.3px solid #444;background:linear-gradient(90deg,#444 50%,transparent 50%)"></div>
<div style="left:153px;top:464px;width:211px;height:19px;background:#c0c0c0;border:1px solid #111;overflow:hidden"><div style="left:0;top:0;width:100%;height:1px;background:#deb887"></div><div class="t" style="left:3px;top:1px;font-size:13.2px;color:#333">Выселен, Карпов Е. В., Карпов Евгений</div><div style="right:0;top:0;width:0;height:0;border-top:6px solid #f00;border-left:6px solid transparent"></div></div>
<div style="left:153px;top:482px;width:211px;height:19px;background:#c0c0c0;border:1px solid #111;overflow:hidden"><div style="left:0;top:0;width:100%;height:1px;background:#deb887"></div><div class="t" style="left:3px;top:1px;font-size:13.2px;color:#333">Выселен, Карпова А. Л., Карпова Анна</div><div style="right:0;top:0;width:0;height:0;border-top:6px solid #f00;border-left:6px solid transparent"></div></div>
<div style="left:433px;top:464px;width:316px;height:19px;background:#afeeee;border:1px solid #111;overflow:hidden"><div style="left:0;top:0;width:100%;height:1px;background:#deb887"></div><div class="t" style="left:19px;top:1px;font-size:13.2px;color:#333">Бронь, ООО "Прекрасное Далеко"</div><div style="right:0;top:0;width:0;height:0;border-top:6px solid #f00;border-left:6px solid transparent"></div></div>
<div style="left:435px;top:465.7px;width:14px;height:14px;border-radius:7px;border:1.3px solid #444;background:linear-gradient(90deg,#444 50%,transparent 50%)"></div>
<div style="left:433px;top:482px;width:316px;height:19px;background:#afeeee;border:1px solid #111;overflow:hidden"><div style="left:0;top:0;width:100%;height:1px;background:#deb887"></div><div class="t" style="left:19px;top:1px;font-size:13.2px;color:#333">Бронь, ООО "Прекрасное Далеко"</div><div style="right:0;top:0;width:0;height:0;border-top:6px solid #f00;border-left:6px solid transparent"></div></div>
<div style="left:435px;top:483.7px;width:14px;height:14px;border-radius:7px;border:1.3px solid #444;background:linear-gradient(90deg,#444 50%,transparent 50%)"></div>
<div style="left:153px;top:534px;width:281px;height:19px;background:#1e90ff;border:1px solid #111;overflow:hidden"><div style="left:0;top:0;width:100%;height:1px;background:#deb887"></div><div class="t" style="left:19px;top:1px;font-size:13.2px;color:#333">Заселен, Неверов А. П., Неверов Аркадий</div><div style="right:0;top:0;width:0;height:0;border-top:6px solid #f00;border-left:6px solid transparent"></div></div>
<div style="left:155px;top:535.7px;width:14px;height:14px;border-radius:7px;border:1.3px solid #444;background:linear-gradient(90deg,#444 50%,transparent 50%)"></div>
<div style="left:153px;top:552px;width:281px;height:19px;background:#ff69b4;border:1px solid #111;overflow:hidden"><div style="left:0;top:0;width:100%;height:1px;background:#deb887"></div><div class="t" style="left:19px;top:1px;font-size:13.2px;color:#333">Заселен, Неверова С. М., Неверов Аркадий</div><div style="right:0;top:0;width:0;height:0;border-top:6px solid #f00;border-left:6px solid transparent"></div></div>
<div style="left:155px;top:553.7px;width:14px;height:14px;border-radius:7px;border:1.3px solid #444;background:linear-gradient(90deg,#444 50%,transparent 50%)"></div>
<div style="left:153px;top:604px;width:351px;height:19px;background:#1e90ff;border:1px solid #111;overflow:hidden"><div style="left:0;top:0;width:100%;height:1px;background:#deb887"></div><div class="t" style="left:19px;top:1px;font-size:13.2px;color:#333">Заселен, Вавилов Р. Р., ООО Химпромзавод</div><div style="right:0;top:0;width:0;height:0;border-top:6px solid #f00;border-left:6px solid transparent"></div></div>
<div style="left:155px;top:605.7px;width:14px;height:14px;border-radius:7px;background:#444"></div>
<div style="left:153px;top:622px;width:351px;height:19px;background:#1e90ff;border:1px solid #111;overflow:hidden"><div style="left:0;top:0;width:100%;height:1px;background:#deb887"></div><div class="t" style="left:19px;top:1px;font-size:13.2px;color:#333">Заселен, Карпов П. Г., ООО Химпромзавод</div><div style="right:0;top:0;width:0;height:0;border-top:6px solid #f00;border-left:6px solid transparent"></div></div>
<div style="left:155px;top:623.7px;width:14px;height:14px;border-radius:7px;background:#444"></div>
<div style="left:188px;top:674px;width:351px;height:19px;background:#1e90ff;border:1px solid #111;overflow:hidden"><div style="left:0;top:0;width:100%;height:1px;background:#deb887"></div><div class="t" style="left:19px;top:1px;font-size:13.2px;color:#333">Заселен, Новиков А. Б., ООО Белое солнце</div><div style="right:0;top:0;width:0;height:0;border-top:6px solid #f00;border-left:6px solid transparent"></div></div>
<div style="left:190px;top:675.7px;width:14px;height:14px;border-radius:7px;border:1.3px solid #333"></div>
<div style="left:188px;top:692px;width:351px;height:18px;background:#1e90ff;border:1px solid #111;overflow:hidden"><div style="left:0;top:0;width:100%;height:1px;background:#deb887"></div><div class="t" style="left:19px;top:1px;font-size:13.2px;color:#333">Заселен, Елисеев В. П., ООО Белое солнце</div><div style="right:0;top:0;width:0;height:0;border-top:6px solid #f00;border-left:6px solid transparent"></div></div>
<div style="left:190px;top:693.2px;width:14px;height:14px;border-radius:7px;border:1.3px solid #333"></div>
<div style="left:588px;top:255px;width:269px;height:23px;border:2px solid #f9c816"></div>
<div style="left:1325px;top:139px;width:8px;height:547px;background:#d6d6d6;border-radius:4px"></div>
<div style="left:1325px;top:139px;width:8px;height:123px;background:#9c9c9c;border-radius:4px"></div>
<div style="left:1325px;top:125px;width:0;height:0;border-left:4px solid transparent;border-right:4px solid transparent;border-bottom:4px solid #c8c8c8"></div>
<div style="left:1325px;top:696px;width:0;height:0;border-left:4px solid transparent;border-right:4px solid transparent;border-top:5px solid #555"></div>
<div class="t" style="left:700px;top:721px;width:637px;text-align:right;font-size:13.1px;color:#333">Выделен период с 13 (ночь) по 20 июля 2025 г. (день), 7 дней, 8 ночей, 1 место</div>
<div style="left:837px;top:264px;width:295px;height:182px;background:#fff;border:1px solid #b4b4b4;box-shadow:2px 2px 2px rgba(0,0,0,.38)"></div>
<div style="left:839px;top:266px;width:291px;height:28px;background:#fbcd1f"></div>
<div class="t" style="left:882px;top:272px;font-size:13.1px;color:#333">Создать заявку</div>
<div class="t" style="left:882px;top:302px;font-size:13.1px;color:#333">Создать путевку</div>
<div class="t" style="left:882px;top:332px;font-size:13.1px;color:#333">Зарегистрировать</div>
<div class="t" style="left:882px;top:362px;font-size:13.1px;color:#333">Выделить квоту</div>
<div class="t" style="left:882px;top:392px;font-size:13.1px;color:#333">Закрыть на ремонт</div>
<div class="t" style="left:882px;top:422px;font-size:13.1px;color:#333">Переключить состояние уборки</div>
<svg style="position:absolute;left:840px;top:260px" width="40" height="190" viewBox="840 260 40 190">
<path d="M862 286.6 L857.6 280.6 A5.4 5.4 0 1 1 866.4 280.6 Z" fill="none" stroke="#3d3d3d" stroke-width="1.5" stroke-linejoin="round"/>
<path d="M862 274.2 V279.8 M859.2 277 H864.8" stroke="#3d3d3d" stroke-width="1.9"/>
<ellipse cx="862" cy="304.8" rx="3.4" ry="4" fill="#3d3d3d"/>
<path d="M855 317 L855.6 312.2 Q856.3 309.3 859.3 309 L864.7 309 Q867.6 309.3 868.3 312 L868.8 317 Z" fill="#3d3d3d"/>
<path d="M860.8 312.8 L864.2 316.2 L870.2 310.2" fill="none" stroke="#fff" stroke-width="3.2"/>
<path d="M861.6 313.4 L864.2 316 L869.6 310.6" fill="none" stroke="#3d3d3d" stroke-width="1.5"/>
<rect x="854.6" y="333.5" width="15" height="11" fill="none" stroke="#3d3d3d" stroke-width="1.05"/>
<circle cx="858.6" cy="336.3" r="1.3" fill="#3d3d3d"/>
<path d="M856.3 341.7 V339.2 Q856.3 337.6 858.6 337.6 Q861 337.6 861 339.2 V341.7 Z" fill="#3d3d3d"/>
<path d="M862.4 336.4 H867.8 M862.4 338.5 H867.8 M862.4 340.5 H865" stroke="#3d3d3d" stroke-width="0.9"/>
<path d="M859 368.8 V365.6 A3 3 0 0 1 865 365.6 V368.8" fill="none" stroke="#3d3d3d" stroke-width="2"/>
<path d="M857 368.7 H867.1 V373.5 Q867.1 377 863.5 377 H860.6 Q857 377 857 373.5 Z" fill="#3d3d3d"/>
<path d="M862 371 V374.8" stroke="#fff" stroke-width="1.3"/>
<rect x="854.1" y="391" width="13.9" height="4.6" rx="1" fill="#3d3d3d"/>
<path d="M868 393 H869.8 V397.6 H861.6 V400.5" fill="none" stroke="#3d3d3d" stroke-width="1.1"/>
<rect x="860.2" y="400.2" width="2.9" height="7" rx="0.8" fill="#3d3d3d"/>
<path d="M860 427 L868.6 435.6" stroke="#222" stroke-width="3"/>
<path d="M860.6 427.6 L862.2 429.2" stroke="#fff" stroke-width="1"/>
<path d="M859.5 420.8 V424 M859.5 428.8 V432 M853.6 426.4 H856.8 M862.2 426.4 H865.4 M855.2 422.1 L857.4 424.3 M863.8 422.1 L861.6 424.3 M855.2 430.7 L857.4 428.5" stroke="#2a2a2a" stroke-width="1.35"/>
</svg>
</body></html>
